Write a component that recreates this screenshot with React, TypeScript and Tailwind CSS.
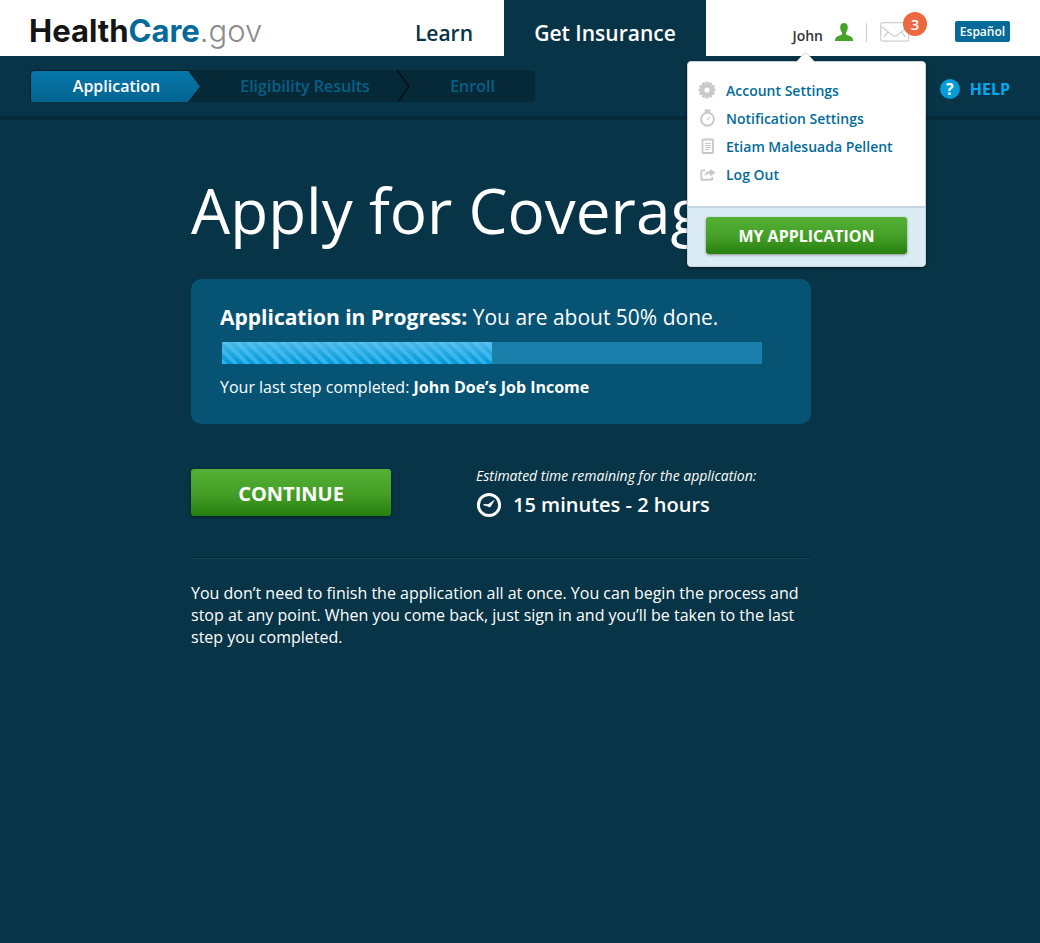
import React from 'react';

const FONT = "font-['Open_Sans','Noto_Sans',sans-serif]";

function GearIcon() {
  return (
    <svg aria-hidden="true" width="18" height="18" viewBox="0 0 18 18">
      <g fill="#c9c9c9">
        {[0, 30, 60, 90, 120, 150].map((a) => (
          <rect key={a} x="7.5" y="0.5" width="3" height="17" rx="0.5" transform={`rotate(${a} 9 9)`} />
        ))}
        <circle cx="9" cy="9" r="6.8" />
      </g>
      <circle cx="9" cy="9" r="2.6" fill="#fff" />
    </svg>
  );
}

function StopwatchIcon() {
  return (
    <svg aria-hidden="true" width="18" height="18" viewBox="0 0 18 18">
      <circle cx="9.5" cy="10.2" r="6.5" fill="none" stroke="#c9c9c9" strokeWidth="1.9" />
      <path d="M6.500 .5h6v2h-1.200v1.600H7.700V2.500H6.500z" fill="#c9c9c9" />
      <path d="M12.600 7.400L10.300 11.200 8.600 10z" fill="#c9c9c9" />
    </svg>
  );
}

function DocumentIcon() {
  return (
    <svg aria-hidden="true" width="18" height="18" viewBox="0 0 18 18">
      <rect x="4.500" y="2.500" width="10.500" height="13.500" rx="0.8" fill="none" stroke="#c9c9c9" strokeWidth="1.900" />
      <path d="M7 6.500h6M7 8.500h6M7 10.500h6M7 12.500h4" stroke="#c9c9c9" strokeWidth="1" />
    </svg>
  );
}

function LogOutIcon() {
  return (
    <svg aria-hidden="true" width="18" height="18" viewBox="0 0 18 18">
      <path d="M7 5.500H4Q3.300 5.500 3.300 6.200V14Q3.300 14.700 4 14.700H13.500Q14.200 14.700 14.200 14V12" fill="none" stroke="#c9c9c9" strokeWidth="1.900" />
      <path d="M17.500 7.600L12 3.800V6C8.500 6.200 6.800 8.200 6.500 11.400 8 9.600 9.500 9 12 9.100V11.400z" fill="#c9c9c9" />
    </svg>
  );
}

function PersonIcon() {
  return (
    <svg aria-hidden="true" width="18" height="18" viewBox="0 0 18 18" fill="#45a32a">
      <path d="M9 0C6.700 0 5.200 1.600 5.200 4.200c0 2.200.7 4 1.800 5.100v2C6.300 12.400 1.400 13 .5 15.200.1 16.200 0 17 0 18h18c0-1-.1-1.800-.5-2.800-.9-2.200-5.800-2.800-6.500-3.900v-2c1.100-1.100 1.800-2.900 1.800-5.100C12.800 1.600 11.300 0 9 0z" />
    </svg>
  );
}

function EnvelopeIcon() {
  return (
    <svg aria-hidden="true" width="30" height="20" viewBox="0 0 30 20" fill="none" stroke="#cfcfcf" strokeWidth="1.200">
      <rect x="0.700" y="0.700" width="28" height="18.500" rx="2" />
      <path d="M1.500 4.500L12 13Q14.700 15.200 17.400 13L28 4.500M4 14.800L8 10M25.400 14.800L21.400 10" />
    </svg>
  );
}

function ClockIcon() {
  return (
    <svg aria-hidden="true" width="26" height="26" viewBox="0 0 26 26">
      <circle cx="13" cy="13" r="10.600" fill="none" stroke="#fff" strokeWidth="3" />
      <path d="M19 7.500L14.800 14.500Q13.400 16 12 14.500L7.500 13.300V12L12 12.200z" fill="#fff" />
    </svg>
  );
}

const MENU = [
  { label: 'Account Settings', icon: <GearIcon /> },
  { label: 'Notification Settings', icon: <StopwatchIcon /> },
  { label: 'Etiam Malesuada Pellent', icon: <DocumentIcon /> },
  { label: 'Log Out', icon: <LogOutIcon /> },
];

function AccountMenu() {
  return (
    <div className="absolute top-[61px] right-[114px] z-10 w-[239px] rounded border border-[#c5d3dc] bg-white shadow-[0_1px_3px_rgba(0,0,0,0.5)]">
      <svg aria-hidden="true" className="absolute -top-[10px] left-[108px]" width="19" height="11" viewBox="0 0 19 11">
        <path d="M0 10.500L8.200 1.300Q9.500 .2 10.800 1.300L19 10.500" fill="#fff" stroke="#cfd4d7" />
        <path d="M0 10h19v1H0z" fill="#fff" />
      </svg>
      <ul className="px-[10px] pt-[14px] pb-[18px]">
        {MENU.map((item) => (
          <li key={item.label}>
            <a href="#" className="flex h-7 items-center gap-[10px] text-[14px] font-semibold text-[#046b99]">
              {item.icon}
              {item.label}
            </a>
          </li>
        ))}
      </ul>
      <div className="rounded-b border-t-2 border-[#c3d5e0] bg-[#dcecf4] px-[18px] pt-[9px] pb-3">
        <button className="h-[37px] w-full rounded-[3px] bg-linear-to-b from-[#54b035] via-[#46a028] to-[#25800d] text-[16px] font-bold text-white shadow-[0_1px_3px_rgba(0,0,0,0.4)]">
          MY APPLICATION
        </button>
      </div>
    </div>
  );
}

function Header() {
  return (
    <header className="relative flex h-14 bg-white">
      <a href="#" className="flex-1 pt-[10px] pl-[29px] font-['Inter',sans-serif] text-[31px] leading-[42px] font-bold text-[#151515]">
        Health<span className="text-[#046b99]">Care</span>
        <span className="font-light text-[#8c8c8c]">.gov</span>
      </a>
      <nav className="flex text-[21px] leading-[66px] font-semibold">
        <a href="#" className="px-[31px] text-[#073446]">Learn</a>
        <a href="#" className="w-[202px] bg-[#073446] text-center text-white">Get Insurance</a>
      </nav>
      <div className="flex w-[334px] justify-end pr-[30px]">
        <button className="flex items-start gap-3 pt-[23px] text-[14px] font-semibold text-[#333]">
          <span className="mt-[2px]">John</span>
          <PersonIcon />
        </button>
        <span className="mt-[23px] ml-[13px] h-[19px] w-px bg-[#ccc]" />
        <a href="#" aria-label="3 messages" className="relative mt-[22px] ml-[13px] h-5">
          <EnvelopeIcon />
          <span className="absolute -top-[10px] left-[23px] size-6 rounded-full bg-[#eb6841] text-center text-[15px] leading-6 font-semibold text-white">3</span>
        </a>
        <button className="mt-[21px] ml-[45px] h-[21px] w-[55px] rounded-[2px] bg-[#046b99] text-[12px] font-semibold text-white">Español</button>
      </div>
      <AccountMenu />
    </header>
  );
}

function Steps() {
  return (
    <div className="flex h-16 items-start justify-between border-b-4 border-[#052a3a] px-[30px] pt-[14px]">
      <ol className="flex h-8 rounded bg-[#052937] text-[16px] leading-8 font-semibold text-[#075f87]">
        <li className="relative w-[171px] pl-[2px] text-center text-white">
          <svg aria-hidden="true" className="absolute inset-0" width="171" height="32" viewBox="0 0 171 32">
            <defs>
              <linearGradient id="step" x1="0" y1="0" x2="0" y2="1">
                <stop offset="0" stopColor="#0678ac" />
                <stop offset="1" stopColor="#056490" />
              </linearGradient>
            </defs>
            <path d="M4 .5H158.500L170.500 16.500 158.500 32H4Q.5 32 .5 28V4Q.5 .5 4 .5z" fill="url(#step)" />
            <path d="M.5 30V4Q.5 .5 4 .5H158.500L170.500 16.500 158.500 32" fill="none" stroke="#041c27" />
          </svg>
          <span className="relative">Application</span>
        </li>
        <li className="relative w-[209px] pr-px text-center">
          Eligibility Results
          <svg aria-hidden="true" className="absolute top-0 right-0" width="14" height="32" viewBox="0 0 14 32">
            <path d="M1 0L13 16.500 2 32" fill="none" stroke="#010d13" strokeWidth="1.300" />
          </svg>
        </li>
        <li className="w-[125px] text-center">Enroll</li>
      </ol>
      <a href="#" className="mt-[9px] flex items-center gap-[10px] text-[16px] leading-5 font-bold text-[#02a9f0]">
        <span className="size-5 rounded-full bg-[#049cd8] text-center text-white">?</span>
        HELP
      </a>
    </div>
  );
}

export default function App() {
  return (
    <div className={`min-h-screen bg-[#073446] text-white ${FONT}`}>
      <Header />
      <Steps />
      <main className="mx-auto max-w-[1040px] pr-[30px] pl-[191px]">
        <div className="max-w-[620px]">
          <h1 className="pt-[45px] text-[62px] leading-[90px] font-normal whitespace-nowrap">Apply for Coverage</h1>
          <section className="mt-6 rounded-[10px] bg-[#065374] px-[29px] pt-[22px] pb-[25px]">
            <h2 className="text-[21px] leading-8 font-normal">
              <strong className="font-bold">Application in Progress:</strong> You are about 50% done.
            </h2>
            <div role="progressbar" aria-label="Application progress" aria-valuenow={50} className="mt-[9px] mr-5 ml-[2px] h-[22px] bg-[#1b7fab]">
              <div className="h-full w-1/2 bg-[repeating-linear-gradient(45deg,rgba(90,200,255,0.5)_0_4px,transparent_4px_8px),linear-gradient(to_bottom,#4cb8e4,#0099d8)]" />
            </div>
            <p className="mt-[11px] text-[16px] leading-6">
              Your last step completed: <strong className="font-bold">John Doe’s Job Income</strong>
            </p>
          </section>
          <div className="mt-[41px] flex items-start gap-[85px]">
            <button className="mt-1 h-[47px] w-[200px] rounded-[3px] bg-linear-to-b from-[#54b035] via-[#46a028] to-[#25800d] pt-[2px] text-[20px] font-bold text-white shadow-[0_1px_3px_rgba(0,0,0,0.4)]">
              CONTINUE
            </button>
            <div>
              <p className="text-[14px] leading-[22px] italic">Estimated time remaining for the application:</p>
              <p className="mt-[5px] flex items-center gap-[11px] text-[20px] leading-[26px] font-semibold">
                <ClockIcon />
                15 minutes - 2 hours
              </p>
            </div>
          </div>
          <hr className="mt-[39px] h-[2px] border-t border-b border-t-[#052634] border-b-[#1b4557]" />
          <p className="mt-[23px] text-[16px] leading-[22px]">
            You don’t need to finish the application all at once. You can begin the process and stop at any point. When you come back, just sign in and you’ll be taken to the last step you completed.
          </p>
        </div>
      </main>
    </div>
  );
}
